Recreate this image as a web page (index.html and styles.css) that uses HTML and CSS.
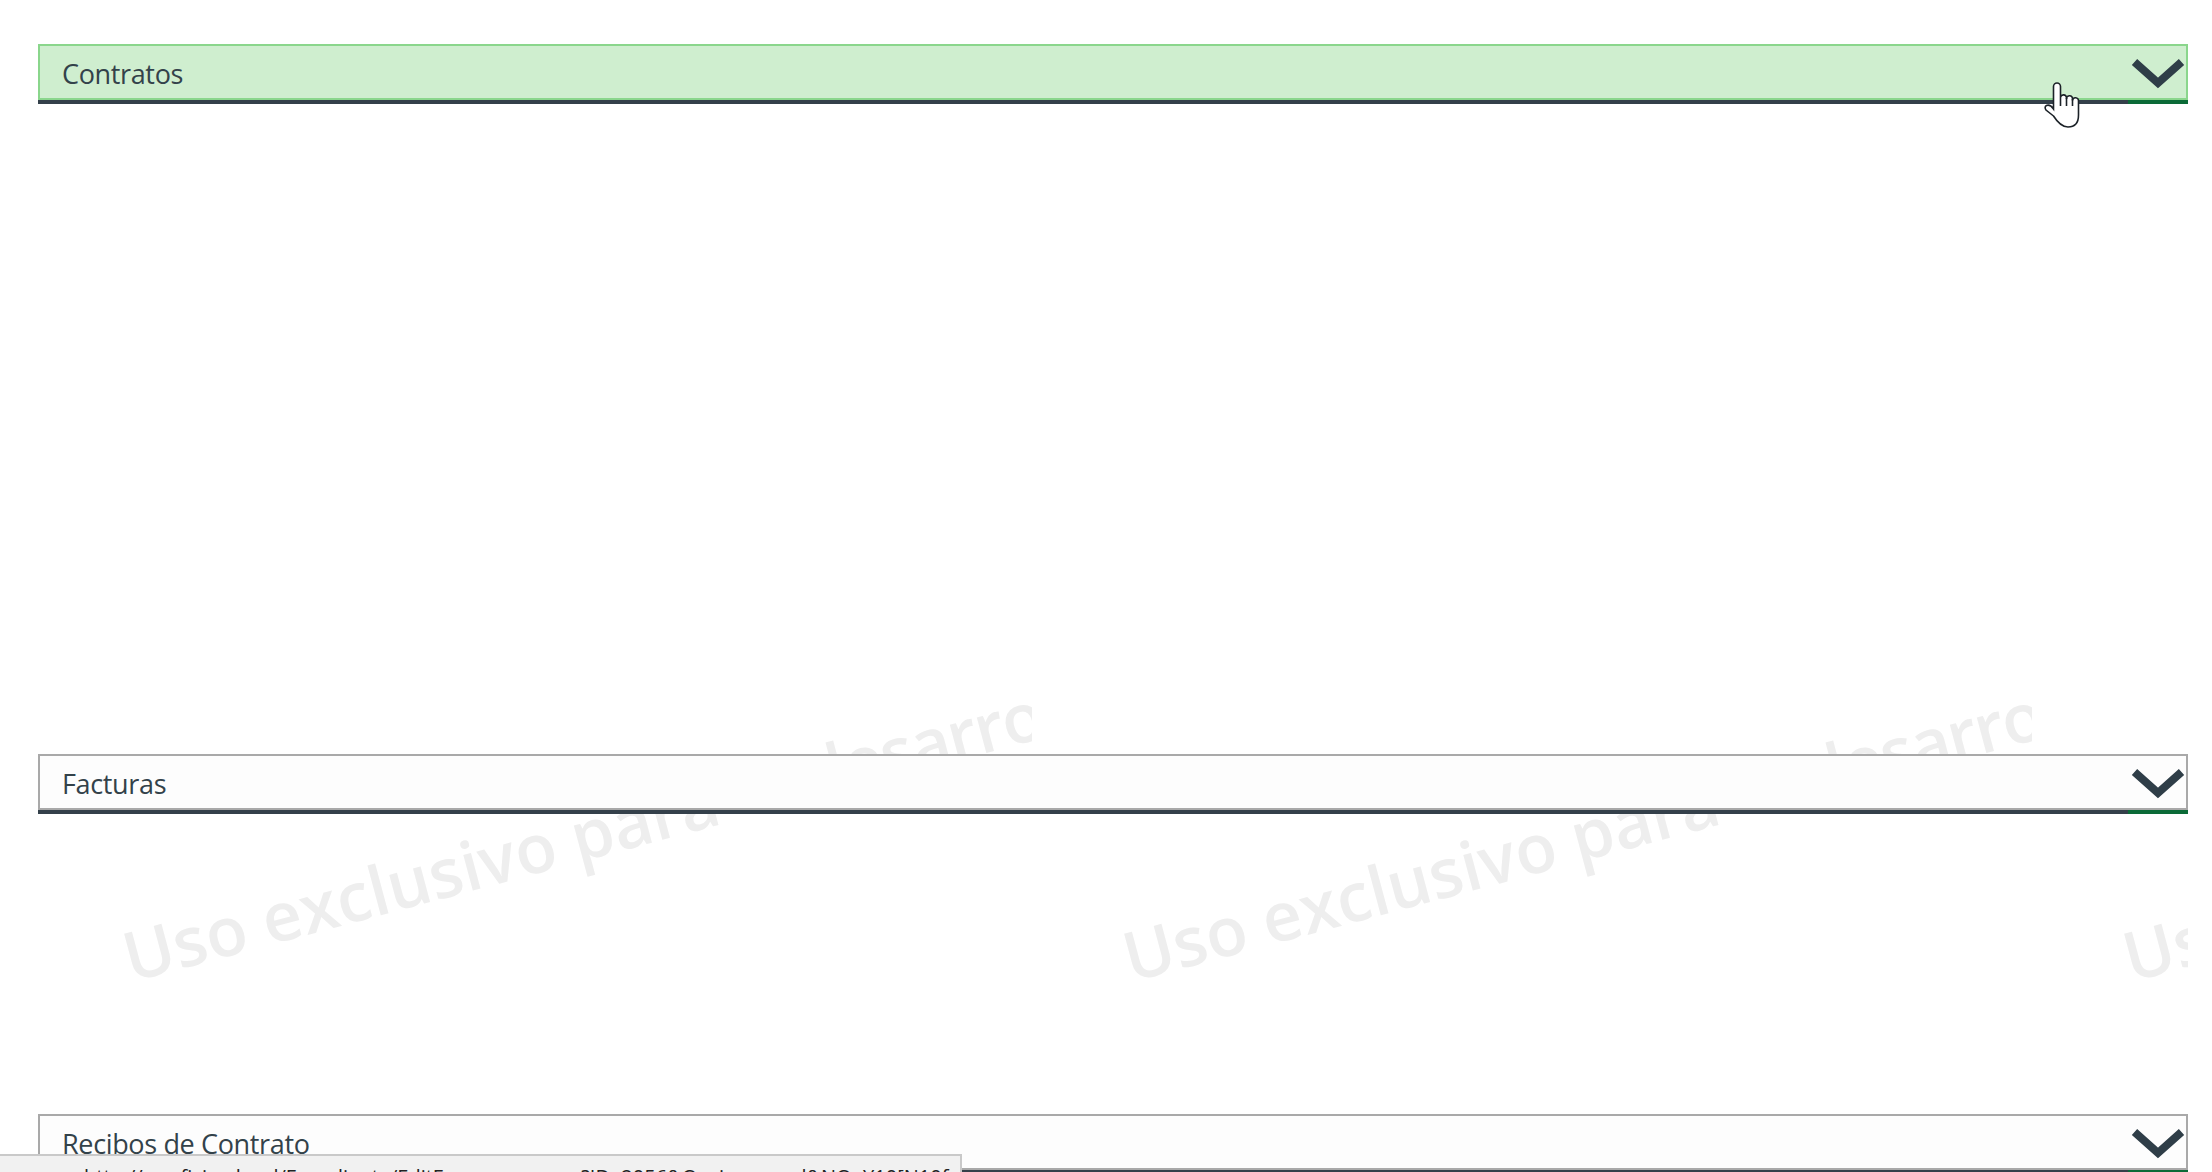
FILE: index.html
```html
<!DOCTYPE html>
<html lang="es">
<head>
    <meta charset="UTF-8">
    <title>Expediente</title>
    <link rel="stylesheet" href="styles.css">
</head>
<body>
    <div class="watermark">
        <div class="watermark-tile"><span class="watermark-text">Uso exclusivo para <span class="watermark-user">desarrollo</span></span></div>
        <div class="watermark-tile"><span class="watermark-text">Uso exclusivo para <span class="watermark-user">desarrollo</span></span></div>
        <div class="watermark-tile"><span class="watermark-text">Uso exclusivo para <span class="watermark-user">desarrollo</span></span></div>
    </div>

    <div class="accordion">
        <section class="acc-section acc-contratos">
            <div class="acc-header acc-header-active">
                <span>Contratos</span>
                <svg class="acc-chevron" viewBox="0 0 52 27"><path d="M2.5 3 L26 24 L49.5 3"/></svg>
            </div>
            <div class="acc-line"><span class="acc-line-end"></span></div>
        </section>
        <section class="acc-section acc-facturas">
            <div class="acc-header">
                <span>Facturas</span>
                <svg class="acc-chevron" viewBox="0 0 52 27"><path d="M2.5 3 L26 24 L49.5 3"/></svg>
            </div>
            <div class="acc-line"><span class="acc-line-end"></span></div>
        </section>
        <section class="acc-section">
            <div class="acc-header">
                <span>Recibos de Contrato</span>
                <svg class="acc-chevron" viewBox="0 0 52 27"><path d="M2.5 3 L26 24 L49.5 3"/></svg>
            </div>
            <div class="acc-line"><span class="acc-line-end"></span></div>
        </section>
    </div>

    <svg class="cursor-hand" viewBox="0 0 36 47">
        <path d="M9.5 34 L2 28 Q0 25 2.5 23.5 Q6 22 9.5 27 V4.5 a3.5 3.5 0 0 1 7 0 V15 a3.1 3.1 0 0 1 6 0.5 V17 a3 3 0 0 1 6 -0.5 V18.5 a3 3 0 0 1 6 0.5 V33 Q34.5 45 24 45 Q16.5 45 9.5 34 Z"/>
        <path d="M16.5 15 V24 M22.5 16 V24 M28.5 17 V24"/>
    </svg>

    <div class="status-bar">http://sa.oficina.local/Expediente/EditEmpresasnueva?ID=2056&amp;Opcion=areal&amp;NO=Y10[N10f</div>
</body>
</html>
```

FILE: styles.css
```css
* {
    box-sizing: border-box;
}
html, body {
    margin: 0;
    height: 1172px;
    overflow: hidden;
}
body {
    position: relative;
    background: #fff;
    font-family: "Open Sans", "Noto Sans", sans-serif;
}
.watermark {
    position: absolute;
    top: 640px;
    left: 32px;
    width: 2156px;
    height: 400px;
    display: flex;
    overflow: hidden;
}
.watermark-tile {
    flex: 0 0 1000px;
    height: 400px;
    position: relative;
    overflow: hidden;
}
.watermark-text {
    position: absolute;
    left: 101px;
    top: 282px;
    white-space: nowrap;
    font-size: 68px;
    font-weight: 600;
    line-height: 1;
    color: #eee;
    transform: rotate(-15deg);
    transform-origin: left bottom;
}
.watermark-user {
    margin-left: 73px;
    letter-spacing: -1.5px;
}
.accordion {
    position: relative;
    height: 1172px;
    overflow: hidden;
    padding: 44px 24px 0 38px;
}
.acc-section {
    height: 360px;
}
.acc-contratos {
    height: 710px;
}
.acc-header {
    height: 56px;
    display: flex;
    align-items: center;
    justify-content: space-between;
    padding: 2px 2px 0 22px;
    background: #fdfdfd;
    border: 2px solid #a9a9a9;
    font-size: 27px;
    letter-spacing: -0.35px;
    color: #33424a;
}
.acc-header-active {
    background: #cfeecf;
    border-color: #8ad68c;
}
.acc-chevron {
    width: 52px;
    height: 27px;
    margin-top: -2px;
    overflow: visible;
}
.acc-chevron path {
    fill: none;
    stroke: #2f3e48;
    stroke-width: 8;
}
.acc-line {
    height: 4px;
    background: #34404a;
    display: flex;
    justify-content: flex-end;
}
.acc-line-end {
    width: 60px;
    background: #0b6a37;
}
.cursor-hand {
    position: absolute;
    left: 2044px;
    top: 82px;
    width: 36px;
    height: 47px;
}
.cursor-hand path {
    fill: #fff;
    stroke: #1c2228;
    stroke-width: 1.6;
}
.status-bar {
    position: absolute;
    left: 0;
    bottom: 0;
    width: 962px;
    height: 18px;
    padding: 9px 0 0 84px;
    background: #f1f1f1;
    border-top: 2px solid #c9c9c9;
    border-right: 2px solid #c9c9c9;
    font-size: 20px;
    line-height: 24px;
    color: #222;
    white-space: nowrap;
    overflow: hidden;
}
```
